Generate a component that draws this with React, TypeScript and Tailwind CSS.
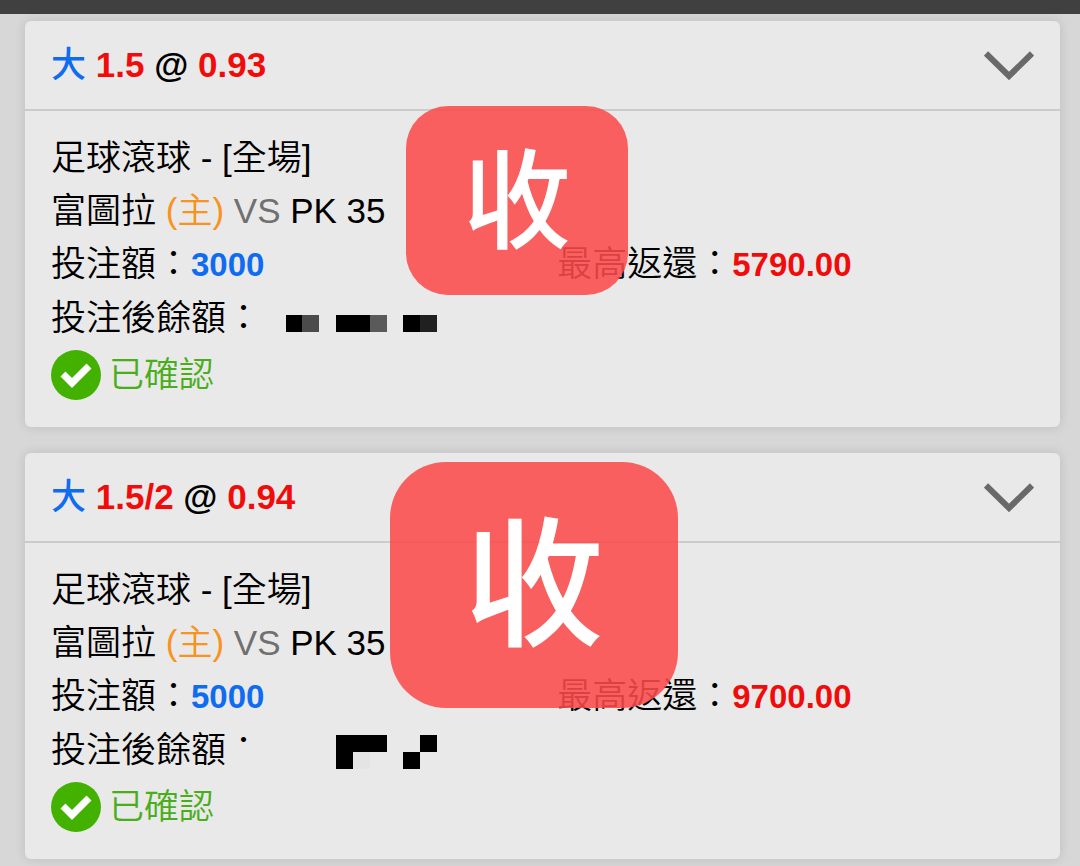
import React from "react";

type Cell = { x: number; y: number; w: number; h?: number; fill: string };

type Bet = {
  line: string;
  odds: string;
  stake: string;
  payout: string;
  mask: React.ReactNode;
  stampClass: string;
};

function Mask({ cells, className }: { cells: Cell[]; className: string }) {
  return (
    <svg
      aria-hidden="true"
      viewBox="0 0 12 2"
      shapeRendering="crispEdges"
      className={`absolute ${className}`}
    >
      {cells.map((c, i) => (
        <rect key={i} x={c.x} y={c.y} width={c.w} height={c.h ?? 1} fill={c.fill} />
      ))}
    </svg>
  );
}

const bets: Bet[] = [
  {
    line: "1.5",
    odds: "0.93",
    stake: "3000",
    payout: "5790.00",
    mask: (
      <Mask
        className="left-46 top-6 h-[34px] w-[202px]"
        cells={[
          { x: 3, y: 0, w: 1, fill: "#000" },
          { x: 4, y: 0, w: 1, fill: "#4b4b4b" },
          { x: 6, y: 0, w: 2, fill: "#000" },
          { x: 8, y: 0, w: 1, fill: "#5a5a5a" },
          { x: 10, y: 0, w: 1, fill: "#000" },
          { x: 11, y: 0, w: 1, fill: "#202020" },
        ]}
      />
    ),
    stampClass: "left-[381px] top-[85px] h-[189px] w-[222px] rounded-[42px] pt-1 text-[108px]",
  },
  {
    line: "1.5/2",
    odds: "0.94",
    stake: "5000",
    payout: "9700.00",
    mask: (
      <Mask
        className="left-46 top-3 h-[34px] w-[202px]"
        cells={[
          { x: 0, y: 1, w: 12, fill: "#e9e9e9" },
          { x: 6, y: 0, w: 3, fill: "#000" },
          { x: 6, y: 1, w: 1, fill: "#000" },
          { x: 7, y: 1, w: 1, fill: "#e4e4e4" },
          { x: 11, y: 0, w: 1, fill: "#000" },
          { x: 10, y: 1, w: 1, fill: "#000" },
        ]}
      />
    ),
    stampClass: "left-[365px] top-[9px] h-[246px] w-[288px] rounded-[56px] pt-1 text-[140px]",
  },
];

function BetCard({ bet }: { bet: Bet }) {
  return (
    <article className="relative rounded-md bg-[#e9e9e9] shadow-[0_0_12px_rgba(0,0,0,0.12)]">
      <header className="flex h-[90px] items-center justify-between border-b-2 border-[#cbcbcb] px-[26px]">
        <h2 className="whitespace-nowrap font-bold text-[#f10c0c]">
          <span className="font-medium text-[#0f6bf0]">大</span> {bet.line}{" "}
          <span className="text-black">@</span> {bet.odds}
        </h2>
        <button type="button" aria-label="收合" className="cursor-pointer">
          <svg viewBox="0 0 50 29" className="h-[29px] w-[50px]" fill="none">
            <path d="M2 2.5 25 25 48 2.5" stroke="#696969" strokeWidth="6" />
          </svg>
        </button>
      </header>
      <div className="px-[26px] pb-[26px] pt-5 font-[350] leading-[53px]">
        <p>足球滾球 - [全場]</p>
        <p>
          富圖拉 <span className="text-[#f7931e]">(主)</span>{" "}
          <span className="text-[#707070]">VS</span> PK 35
        </p>
        <div className="flex whitespace-nowrap">
          <p className="w-[51.5%]">
            投注額：<b className="text-[33px] font-bold text-[#0f6bf0]">{bet.stake}</b>
          </p>
          <p>
            最高返還：<b className="text-[33px] font-bold text-[#f10c0c]">{bet.payout}</b>
          </p>
        </div>
        <p className="relative">
          投注後餘額：
          {bet.mask}
        </p>
        <p className="mt-1 flex items-center gap-2 text-[#4aae1b]">
          <svg viewBox="0 0 50 50" className="size-[50px]" fill="none">
            <circle cx="25" cy="25" r="25" fill="#43b100" />
            <path d="M12 24 21 33 38 16" stroke="#fff" strokeWidth="7" />
          </svg>
          已確認
        </p>
      </div>
      <div
        className={`absolute flex items-center justify-center bg-[#fb4b4b]/87 font-medium leading-none text-white ${bet.stampClass}`}
      >
        收
      </div>
    </article>
  );
}

export default function App() {
  return (
    <div className="min-h-screen bg-[#d7d7d7] font-['Liberation_Sans','Noto_Sans_CJK_TC',sans-serif] text-[35px] text-black">
      <div className="h-3.5 bg-[#404040]" />
      <main className="flex flex-col gap-[26px] pb-[7px] pl-[25px] pr-5 pt-[7px]">
        {bets.map((bet) => (
          <BetCard key={bet.odds} bet={bet} />
        ))}
      </main>
    </div>
  );
}
